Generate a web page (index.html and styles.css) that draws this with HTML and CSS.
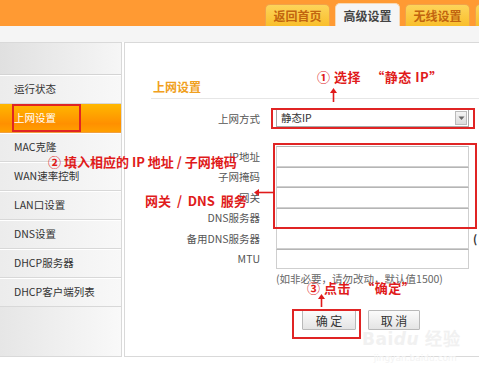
FILE: index.html
```html
<!DOCTYPE html>
<html lang="zh-CN">
<head>
<meta charset="utf-8">
<title>上网设置</title>
<link rel="stylesheet" href="styles.css">
</head>
<body>
<div class="page">
  <header class="top">
    <nav class="tabs">
      <a class="tab">返回首页</a>
      <a class="tab active">高级设置</a>
      <a class="tab">无线设置</a>
      <a class="tab">系统工具</a>
    </nav>
  </header>
  <div class="band"></div>
  <div class="main">
    <aside class="side">
      <div class="side-head"></div>
      <div class="item">运行状态</div>
      <div class="item active">上网设置</div>
      <div class="item">MAC克隆</div>
      <div class="item">WAN速率控制</div>
      <div class="item">LAN口设置</div>
      <div class="item">DNS设置</div>
      <div class="item">DHCP服务器</div>
      <div class="item">DHCP客户端列表</div>
    </aside>
    <section class="panel">
      <h2 class="title">上网设置</h2>
      <div class="form">
        <div class="row sel-row">
          <label class="lbl">上网方式</label>
          <div class="select">静态IP<span class="arrow"><svg width="7" height="5" viewBox="0 0 7 5"><path d="M0.5 0.5 L3.5 4 L6.5 0.5 Z" fill="#666"/></svg></span></div>
        </div>
        <div class="fields">
          <label class="lbl">IP地址</label><div class="input"></div>
          <label class="lbl">子网掩码</label><div class="input"></div>
          <label class="lbl">网关</label><div class="input"></div>
          <label class="lbl">DNS服务器</label><div class="input"></div>
          <label class="lbl">备用DNS服务器</label><div class="input opt"><span class="paren">(</span></div>
          <label class="lbl">MTU</label><div class="input"></div>
        </div>
        <div class="hint">(如非必要，请勿改动，默认值1500)</div>
        <div class="buttons">
          <button class="btn">确 定</button>
          <button class="btn">取 消</button>
        </div>
      </div>
    </section>
  </div>

  <div class="box box-side"></div>
  <div class="box box-select"></div>
  <div class="box box-fields"></div>
  <div class="box box-ok"></div>

  <div class="note note1">① 选择&nbsp;&nbsp;&nbsp;“静态 IP”</div>
  <div class="note note2">② 填入相应的 IP 地址 / 子网掩码</div>
  <div class="note note3">网关&nbsp; /&nbsp; DNS&nbsp; 服务</div>
  <div class="note note4">③ 点击&nbsp;&nbsp; “确定”</div>

  <svg class="arrow-svg a1" width="9" height="14" viewBox="0 0 9 14"><path d="M4.5 14 V4" stroke="#e01b1b" stroke-width="1.6"/><path d="M1 5 L4.5 0 L8 5 Z" fill="#e01b1b"/></svg>
  <svg class="arrow-svg a2" width="20" height="9" viewBox="0 0 20 9"><path d="M20 4.5 H4" stroke="#e01b1b" stroke-width="1.6"/><path d="M5 1 L0 4.5 L5 8 Z" fill="#e01b1b"/></svg>
  <svg class="arrow-svg a3" width="9" height="13" viewBox="0 0 9 13"><path d="M4.5 13 V4" stroke="#e01b1b" stroke-width="1.6"/><path d="M1 5 L4.5 0 L8 5 Z" fill="#e01b1b"/></svg>

  <div class="wm">
    <div class="wm1">Bai<span>du</span> 经验</div>
    <div class="wm2">jingyan.baidu.com</div>
  </div>
</div>
</body>
</html>
```

FILE: styles.css
```css
* { box-sizing: border-box; }
html, body { margin: 0; padding: 0; background: #fff; }
body { font-family: "Noto Sans CJK SC", "DejaVu Sans", sans-serif; font-size: 11px; color: #333; }

.page { position: relative; width: 479px; height: 368px; overflow: hidden; background: #fff; }

.top { height: 26px; background: #ff9a33; display: flex; align-items: flex-end; }
.tabs { display: flex; align-items: flex-end; gap: 5px; padding-left: 265px; white-space: nowrap; }
.tab {
  display: block; flex: none; width: 65px; height: 22px; line-height: 22px;
  text-align: center; font-size: 12px; font-weight: bold; color: #c2650f;
  background: linear-gradient(#fdd45a, #f9bf2c);
  border: 1px solid #f0a34a; border-bottom: none;
  border-radius: 5px 5px 0 0;
}
.tab.active { height: 23px; line-height: 23px; background: #f5f5f5; color: #444; border-color: #f7d9b5; }

.band { height: 16px; background: #f5f5f5; }

.main { display: flex; gap: 2px; height: 315px; }

.side {
  width: 122px; flex: none; display: flex; flex-direction: column;
  border: 1px solid #d9d9d9; border-left: none;
  background: linear-gradient(to right, #e6e6e6, #f9f9f9);
}
.side-head { height: 32px; border-bottom: 1px solid #d4d4d4; background: linear-gradient(to right, #e0e0e0, #f6f6f6); }
.item {
  height: 29px; line-height: 28px; padding-left: 14px; font-size: 10.5px; color: #333;
  border-bottom: 1px solid #d8d8d8; background: linear-gradient(to right, #ececec, #f8f8f8);
  box-shadow: inset 0 1px 0 #fff;
}
.item.active { color: #fff; background: linear-gradient(#ffb800, #ff9000 70%, #ffa000); box-shadow: none; border-bottom-color: #f0a040; }

.panel { flex: 1; border: 1px solid #d9d9d9; border-right: none; background: #fff; padding: 37px 0 0 26px; }
.title {
  margin: 0; font-size: 12px; font-weight: bold; color: #f0a020; line-height: 14px;
  padding: 0 0 4px 2px; border-bottom: 1px solid #e6e6e6;
}

.form { margin-top: 10px; }
.row, .fields { display: grid; grid-template-columns: 109px 193px; column-gap: 16px; }
.sel-row { height: 18px; align-items: center; }
.lbl { text-align: right; font-size: 10.5px; color: #555; white-space: nowrap; }
.select {
  position: relative; height: 18px; line-height: 16px; padding-left: 4px; font-size: 10.5px; color: #333;
  border: 1px solid #a9a9a9; background: #fff;
}
.select .arrow {
  position: absolute; right: 1px; top: 1px; width: 12px; height: 14px;
  background: linear-gradient(#f4f4f4, #dcdcdc); border: 1px solid #bbb;
  display: flex; align-items: center; justify-content: center;
}

.fields { margin-top: 19px; grid-auto-rows: 20.5px; align-items: center; }
.input { position: relative; height: 20.5px; border: 1px solid #cfcfcf; border-top-color: #b5b5b5; background: #fff; }
.paren { position: absolute; left: 196px; top: 1px; font-size: 11px; line-height: 16px; font-weight: bold; color: #333; }

.hint { margin: 3px 0 0 125px; font-size: 10.5px; color: #666; line-height: 14px; white-space: nowrap; }

.buttons { display: flex; gap: 12px; margin: 24px 0 0 151px; }
.btn {
  height: 20px; padding: 0; font-family: inherit; font-size: 12px; color: #333;
  border: 1px solid #b9b9b9; background: linear-gradient(#fbfbfb, #e4e4e4); border-radius: 1px;
}
.btn:first-child { width: 54px; }
.btn:last-child { width: 52px; }

.box { position: absolute; border: 2px solid #e02424; }
.box-side { left: 12px; top: 104px; width: 69px; height: 28px; }
.box-select { left: 271px; top: 108px; width: 204px; height: 21px; }
.box-fields { left: 273px; top: 143px; width: 204px; height: 86px; }
.box-ok { left: 292px; top: 309px; width: 69px; height: 30px; }

.note { position: absolute; color: #e01b1b; font-weight: bold; font-size: 13px; line-height: 16px; white-space: pre; }
.note1 { left: 317px; top: 69px; letter-spacing: 0.5px; }
.note2 { left: 48px; top: 154px; }
.note3 { left: 145px; top: 193px; }
.note4 { left: 307px; top: 280px; letter-spacing: 0.5px; }

.arrow-svg { position: absolute; }
.a1 { left: 329px; top: 88px; }
.a2 { left: 254px; top: 188px; }
.a3 { left: 317px; top: 294px; }

.wm { position: absolute; left: 362px; top: 330px; color: #f1f1f1; text-align: center; pointer-events: none; }
.wm1 { font-family: "DejaVu Sans", sans-serif; font-size: 17px; font-weight: bold; line-height: 18px; letter-spacing: 0.5px; }
.wm1 span { font-style: italic; }
.wm2 { font-family: "DejaVu Sans", sans-serif; font-size: 9px; line-height: 12px; margin-top: 4px; padding-left: 8px; color: #f3f3f3; }
```
